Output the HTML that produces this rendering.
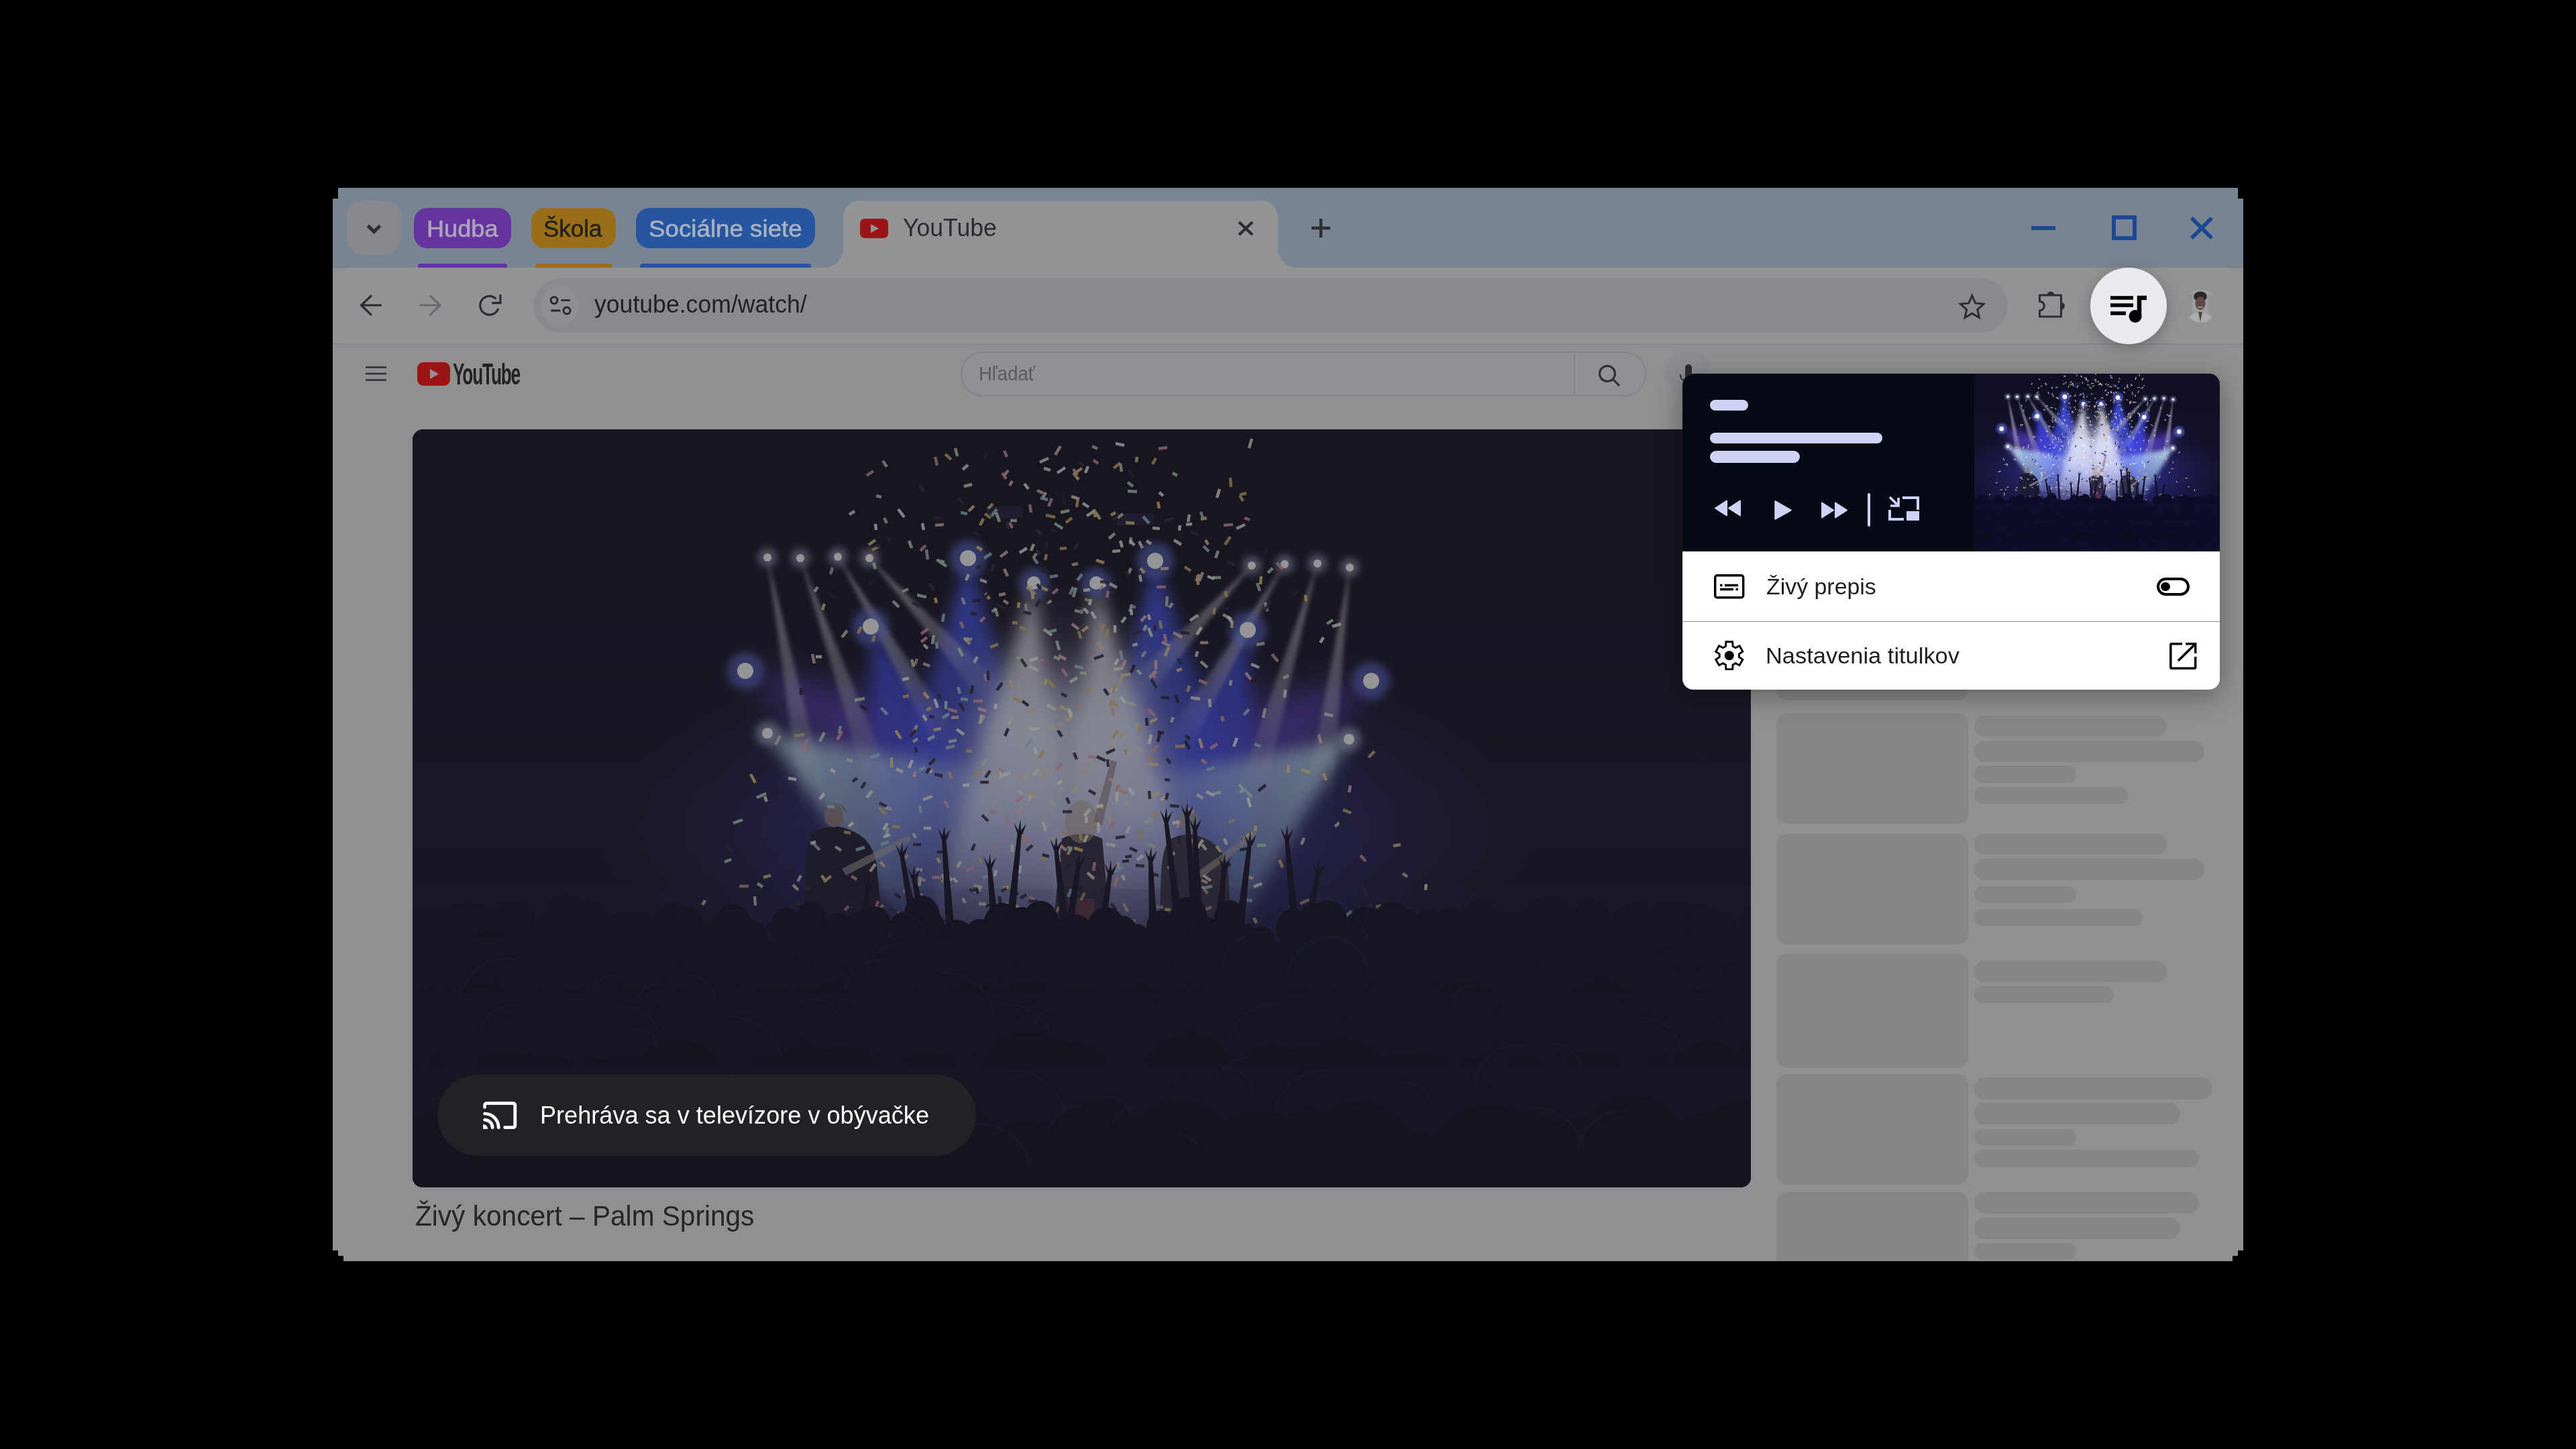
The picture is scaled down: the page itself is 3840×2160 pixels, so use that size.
<!DOCTYPE html><html><head><meta charset="utf-8"><style>
html,body{margin:0;padding:0;background:#000;width:3840px;height:2160px;overflow:hidden;}
*{box-sizing:border-box;}
.a{position:absolute;}
.t{position:absolute;white-space:nowrap;font-family:"Liberation Sans", sans-serif;}
svg{position:absolute;overflow:visible;}
</style></head><body><div class="a" style="left:496px;top:280px;width:2848px;height:1600px;background:#8f9091;clip-path:polygon(8px 0,2840px 0,2840px 16px,2848px 16px,2848px 1584px,2840px 1584px,2840px 1592px,2832px 1592px,2832px 1600px,16px 1600px,16px 1592px,8px 1592px,8px 1584px,0 1584px,0 16px,8px 16px);overflow:hidden"><div class="a" style="left:0;top:0;width:2848px;height:120px;background:#788394"></div><div class="a" style="left:21px;top:19px;width:81px;height:81px;border-radius:24px;background:#86888d"></div><svg style="left:50px;top:54px" width="23" height="15" viewBox="0 0 23 15"><path d="M2.5 2.5 L11.5 11.5 L20.5 2.5" fill="none" stroke="#2d2e31" stroke-width="5"/></svg><div class="a" style="left:121px;top:30px;width:145px;height:60px;border-radius:20px;background:#6634a0"></div><div class="a" style="left:127px;top:113px;width:133px;height:8px;border-radius:4px;background:#6634a0"></div><div class="a" style="left:296px;top:30px;width:126px;height:60px;border-radius:20px;background:#9a6e18"></div><div class="a" style="left:302px;top:113px;width:114px;height:8px;border-radius:4px;background:#9a6e18"></div><div class="a" style="left:452px;top:30px;width:267px;height:60px;border-radius:20px;background:#2756a0"></div><div class="a" style="left:458px;top:113px;width:255px;height:8px;border-radius:4px;background:#2756a0"></div><div class="t" style="left:140px;top:43.0px;font-size:35px;line-height:35px;color:#aca6b8;font-weight:400;transform:scaleX(1.0326);transform-origin:0 0;-webkit-text-stroke:0.6px #aca6b8;">Hudba</div><div class="t" style="left:314.4px;top:43.0px;font-size:35px;line-height:35px;color:#24211c;font-weight:400;transform:scaleX(1.0004);transform-origin:0 0;-webkit-text-stroke:0.6px #24211c;">Škola</div><div class="t" style="left:470.79999999999995px;top:43.0px;font-size:35px;line-height:35px;color:#aab2c2;font-weight:400;transform:scaleX(1.0495);transform-origin:0 0;-webkit-text-stroke:0.6px #aab2c2;">Sociálne siete</div><div class="a" style="left:761px;top:19px;width:648px;height:110px;border-radius:24px 24px 0 0;background:#929394"></div><div class="a" style="left:731px;top:89px;width:30px;height:30px;background:radial-gradient(circle at 0 0,transparent 30px,#929394 30.5px)"></div><div class="a" style="left:1409px;top:89px;width:30px;height:30px;background:radial-gradient(circle at 100% 0,transparent 30px,#929394 30.5px)"></div><svg style="left:786px;top:46px" width="42" height="29" viewBox="0 0 42 29"><rect width="42" height="29" rx="7" fill="#9c1414"/><path d="M16 8 L28 14.5 L16 21z" fill="#929394"/></svg><div class="t" style="left:849.5999999999999px;top:41.5px;font-size:36px;line-height:36px;color:#2a2b2e;font-weight:400;transform:scaleX(0.9875);transform-origin:0 0;">YouTube</div><svg style="left:1349px;top:49px" width="24" height="23" viewBox="0 0 24 23"><path d="M2 2L22 21M22 2L2 21" stroke="#2a2b2e" stroke-width="4.2"/></svg><svg style="left:1459px;top:46px" width="28" height="28" viewBox="0 0 28 28"><path d="M14 0V28M0 14H28" stroke="#2d2e31" stroke-width="4.4"/></svg><div class="a" style="left:2532px;top:57px;width:36px;height:6px;background:#1c4890"></div><div class="a" style="left:2652px;top:41px;width:37px;height:37px;border:6px solid #1c4890"></div><svg style="left:2768px;top:42px" width="36" height="36" viewBox="0 0 36 36"><path d="M3 3L33 33M33 3L3 33" stroke="#1c4890" stroke-width="6"/></svg><div class="a" style="left:4px;top:119px;width:2844px;height:114px;border-radius:20px 24px 0 0;background:#929394"></div><div class="a" style="left:0px;top:139px;width:4px;height:100px;background:#929394"></div><div class="a" style="left:0;top:232px;width:2848px;height:2px;background:#858689"></div><svg style="left:40px;top:159px" width="36" height="34" viewBox="0 0 36 34"><path d="M32.8 16H2.5M17.9 1.4L2.5 16L17.9 30.9" fill="none" stroke="#2a2b2e" stroke-width="3.2"/></svg><svg style="left:128px;top:159px" width="36" height="34" viewBox="0 0 36 34"><path d="M1.5 16H32M16.6 1.4L32 16L16.6 30.9" fill="none" stroke="#6a6b6e" stroke-width="3.2"/></svg><svg style="left:216px;top:158px" width="38" height="36" viewBox="0 0 38 36"><path d="M27.4 7.5A13.9 13.9 0 1 0 30.7 21.9" fill="none" stroke="#2a2b2e" stroke-width="3.1"/><path d="M33.9 1V13.6H21.3" fill="none" stroke="#2a2b2e" stroke-width="3.1"/></svg><div class="a" style="left:299px;top:135px;width:2198px;height:81px;border-radius:41px;background:#898a8d"></div><div class="a" style="left:310px;top:147px;width:58px;height:58px;border-radius:29px;background:#8e8f92"></div><svg style="left:323px;top:161px" width="34" height="30" viewBox="0 0 34 30"><circle cx="7" cy="6.6" r="5" fill="none" stroke="#262729" stroke-width="2.8"/><path d="M17.3 6.6H30.6M2.4 22H16.3" stroke="#262729" stroke-width="2.8"/><circle cx="26" cy="22" r="5" fill="none" stroke="#262729" stroke-width="2.8"/></svg><div class="t" style="left:390px;top:155.9px;font-size:36px;line-height:36px;color:#1f2023;font-weight:400;transform:scaleX(0.9892);transform-origin:0 0;">youtube.com/watch/</div><svg style="left:2416px;top:150px" width="56" height="56" viewBox="2912 430 56 56"><path d="M2939.70 440.60 L2944.64 452.00 L2957.01 453.18 L2947.69 461.40 L2950.40 473.52 L2939.70 467.20 L2929.00 473.52 L2931.71 461.40 L2922.39 453.18 L2934.76 452.00Z" fill="none" stroke="#2a2b2e" stroke-width="2.9" stroke-linejoin="miter" stroke-miterlimit="10"/></svg><svg style="left:2539px;top:150px" width="46" height="46" viewBox="3035 430 46 46"><path d="M3040.5 440H3072.5V472H3040.5V462.8A6.8 6.8 0 0 0 3040.5 449.2Z" fill="none" stroke="#2d2e31" stroke-width="3.1" stroke-linejoin="round"/><path d="M3051.5 440A5.5 5.5 0 0 1 3062.5 440Z M3072.5 450.5A5.5 5.5 0 0 1 3072.5 461.5Z" fill="#2d2e31"/></svg><svg style="left:2759px;top:151px" width="50" height="50" viewBox="3255 431 50 50"><defs><clipPath id="avc"><circle cx="3280.4" cy="456" r="24.5"/></clipPath></defs><g clip-path="url(#avc)"><rect x="3255" y="431" width="50" height="50" fill="#9c9d9f"/><rect x="3256" y="438" width="12" height="36" fill="#8a8b8d" opacity="0.7"/><rect x="3292" y="440" width="12" height="34" fill="#8e8f91" opacity="0.7"/><path d="M3258 482Q3262 467 3280 465Q3298 467 3302 482Z" fill="#acadaf"/><path d="M3277 465L3280 480L3283 465Z" fill="#5a403a"/><ellipse cx="3280" cy="442" rx="10" ry="7.5" fill="#2e2a2a"/><ellipse cx="3280" cy="452" rx="7.5" ry="10" fill="#604844"/><rect x="3276" y="457" width="8" height="2" rx="1" fill="#9a8a88"/></g></svg><svg style="left:49px;top:266px" width="31" height="22" viewBox="0 0 31 22"><path d="M0 1.5H31M0 11H31M0 20.5H31" stroke="#2d2e31" stroke-width="2.6"/></svg><svg style="left:126px;top:260px" width="49" height="35" viewBox="0 0 49 35"><rect width="49" height="35" rx="9" fill="#9c1414"/><path d="M19 10 L32 17.5 L19 25z" fill="#919295"/></svg><div class="t" style="left:179px;top:255.8px;font-size:44px;line-height:44px;color:#212224;font-weight:700;transform:scaleX(0.5964);transform-origin:0 0;letter-spacing:-2px;">YouTube</div><div class="a" style="left:936px;top:244px;width:1022px;height:67px;border-radius:34px;border:2px solid #848589;background:#909194"></div><div class="a" style="left:1850px;top:244px;width:2px;height:67px;background:#848589"></div><div class="t" style="left:963px;top:261.6px;font-size:30px;line-height:30px;color:#5a5b5e;font-weight:400;transform:scaleX(0.9158);transform-origin:0 0;">Hľadať</div><svg style="left:1886px;top:263px" width="34" height="36" viewBox="0 0 34 36"><circle cx="14" cy="14" r="11.5" fill="none" stroke="#2d2e31" stroke-width="3"/><path d="M22.5 22.5L32 32" stroke="#2d2e31" stroke-width="3"/></svg><div class="a" style="left:1987px;top:243px;width:68px;height:68px;border-radius:50%;background:#8b8c8f"></div><div class="a" style="left:2016px;top:263px;width:10px;height:26px;border-radius:5px;background:#2a2b2e"></div><svg style="left:2005px;top:275px" width="20" height="20" viewBox="0 0 20 20"><path d="M4 3Q4 11 10 12" fill="none" stroke="#2a2b2e" stroke-width="2"/></svg><div class="a" style="left:119px;top:360px;width:1995px;height:1130px;border-radius:16px;overflow:hidden;background:#15142a"><svg style="left:0;top:0;" width="1995" height="1130" viewBox="0 0 1995 1130"><use href="#scene"/><rect width="1995" height="1130" fill="#211f1b" opacity="0.45"/></svg></div><div class="a" style="left:156px;top:1322px;width:803px;height:121px;border-radius:61px;background:#212226"></div><svg style="left:219px;top:1355px" width="60" height="55" viewBox="715 1635 60 55"><path d="M722.6 1650.5V1648Q722.6 1644.6 726 1644.6H764.4Q767.8 1644.6 767.8 1648V1677.2Q767.8 1680.6 764.4 1680.6H752.6" fill="none" stroke="#fff" stroke-width="4.8" stroke-linecap="round" stroke-linejoin="round"/><path d="M722.6 1660.2A20.6 20.6 0 0 1 743.2 1680.8M722.6 1669.3A11.5 11.5 0 0 1 734.1 1680.8" fill="none" stroke="#fff" stroke-width="4.8" stroke-linecap="round"/><path d="M720.2 1676A7 7 0 0 1 727.2 1683H720.2Z" fill="#fff"/></svg><div class="t" style="left:309px;top:1364.0px;font-size:37px;line-height:37px;color:#ffffff;font-weight:400;transform:scaleX(0.9759);transform-origin:0 0;">Prehráva sa v televízore v obývačke</div><div class="t" style="left:123px;top:1512.4px;font-size:42px;line-height:42px;color:#242527;font-weight:400;transform:scaleX(0.9666);transform-origin:0 0;">Živý koncert – Palm Springs</div><div class="a" style="left:2152px;top:604px;width:286px;height:160px;border-radius:16px;background:#858688"></div><div class="a" style="left:2152px;top:783px;width:286px;height:165px;border-radius:16px;background:#858688"></div><div class="a" style="left:2152px;top:963px;width:286px;height:165px;border-radius:16px;background:#858688"></div><div class="a" style="left:2152px;top:1142px;width:286px;height:170px;border-radius:16px;background:#858688"></div><div class="a" style="left:2152px;top:1321px;width:286px;height:165px;border-radius:16px;background:#858688"></div><div class="a" style="left:2152px;top:1497px;width:286px;height:173px;border-radius:16px;background:#858688"></div><div class="a" style="left:2447px;top:787px;width:287px;height:31px;border-radius:16px;background:#858688"></div><div class="a" style="left:2447px;top:824px;width:343px;height:32px;border-radius:16px;background:#858688"></div><div class="a" style="left:2447px;top:861px;width:152px;height:26px;border-radius:16px;background:#858688"></div><div class="a" style="left:2447px;top:893px;width:229px;height:25px;border-radius:16px;background:#858688"></div><div class="a" style="left:2447px;top:963px;width:287px;height:31px;border-radius:16px;background:#858688"></div><div class="a" style="left:2447px;top:1000px;width:343px;height:32px;border-radius:16px;background:#858688"></div><div class="a" style="left:2447px;top:1041px;width:152px;height:25px;border-radius:16px;background:#858688"></div><div class="a" style="left:2447px;top:1075px;width:251px;height:25px;border-radius:16px;background:#858688"></div><div class="a" style="left:2447px;top:1152px;width:287px;height:32px;border-radius:16px;background:#858688"></div><div class="a" style="left:2447px;top:1190px;width:208px;height:25px;border-radius:16px;background:#858688"></div><div class="a" style="left:2447px;top:1326px;width:355px;height:33px;border-radius:16px;background:#858688"></div><div class="a" style="left:2447px;top:1364px;width:307px;height:32px;border-radius:16px;background:#858688"></div><div class="a" style="left:2447px;top:1403px;width:152px;height:25px;border-radius:16px;background:#858688"></div><div class="a" style="left:2447px;top:1434px;width:335px;height:26px;border-radius:16px;background:#858688"></div><div class="a" style="left:2447px;top:1497px;width:335px;height:32px;border-radius:16px;background:#858688"></div><div class="a" style="left:2447px;top:1535px;width:307px;height:32px;border-radius:16px;background:#858688"></div><div class="a" style="left:2447px;top:1573px;width:152px;height:25px;border-radius:16px;background:#858688"></div></div><div class="a" style="left:3116px;top:399px;width:114px;height:114px;border-radius:50%;background:#e8eaee;box-shadow:0 6px 24px rgba(0,0,0,0.25)"></div><svg style="left:3146px;top:441px" width="54" height="40" viewBox="0 0 54 40"><path d="M0 3H34M0 14H34M0 26H23" stroke="#000" stroke-width="5.5"/><path d="M43 34V3H54" fill="none" stroke="#000" stroke-width="6.5"/><circle cx="37" cy="30.5" r="9.5" fill="#000"/></svg><div class="a" style="left:2508px;top:557px;width:801px;height:471px;border-radius:16px;overflow:hidden;background:#fff;box-shadow:0 8px 40px rgba(0,0,0,0.35)"><div class="a" style="left:0;top:0;width:801px;height:265px;background:#060a14"></div><svg style="left:435px;top:0;overflow:hidden" width="366" height="265" viewBox="0 0 366 265"><g transform="translate(-100,-20) scale(0.2837)"><use href="#scene"/></g></svg><div class="a" style="left:41px;top:39px;width:57px;height:16px;border-radius:8px;background:#cfd3f7"></div><div class="a" style="left:41px;top:88px;width:257px;height:16px;border-radius:8px;background:#cfd3f7"></div><div class="a" style="left:41px;top:115px;width:134px;height:18px;border-radius:9px;background:#cfd3f7"></div><svg style="left:48px;top:188px" width="40" height="26" viewBox="0 0 40 26"><path d="M1 12.5L18 1.5V23.5Z M21 12.5L38 1.5V23.5Z" fill="#cfd3f7" stroke="#cfd3f7" stroke-width="2" stroke-linejoin="round"/></svg><svg style="left:137px;top:189px" width="26" height="30" viewBox="0 0 26 30"><path d="M1.5 1.5L24.5 14.5L1.5 27.5Z" fill="#cfd3f7" stroke="#cfd3f7" stroke-width="2.5" stroke-linejoin="round"/></svg><svg style="left:207px;top:191px" width="40" height="26" viewBox="0 0 40 26"><path d="M1 1.5L18 12.5L1 23.5Z M21 1.5L38 12.5L21 23.5Z" fill="#cfd3f7" stroke="#cfd3f7" stroke-width="2" stroke-linejoin="round"/></svg><div class="a" style="left:276px;top:178px;width:4px;height:50px;border-radius:2px;background:#cfd3f7"></div><svg style="left:307px;top:182px" width="46" height="37" viewBox="0 0 46 37"><path d="M21 3H44V21M2 21V35H23" fill="none" stroke="#cfd3f7" stroke-width="4"/><rect x="27" y="23" width="19" height="14" fill="#cfd3f7"/><path d="M2 2L15 15M3 15H15V3" fill="none" stroke="#cfd3f7" stroke-width="3.6"/></svg><div class="a" style="left:0;top:368.5px;width:801px;height:1.5px;background:#7c8ac4"></div><svg style="left:47px;top:299px" width="46" height="37" viewBox="0 0 46 37"><rect x="1.7" y="1.7" width="42" height="33" rx="3" fill="none" stroke="#000" stroke-width="3.4"/><path d="M9 16.5H12.5M16 16.5H36M9 22.5H29M32.5 22.5H36" stroke="#000" stroke-width="3.4"/></svg><svg style="left:42px;top:393px" width="56" height="56" viewBox="2550 950 56 56"><path d="M2572.5 963.4 L2572.9 956.8 L2582.7 956.8 L2583.1 963.4 L2587.1 965.7 L2593.0 962.7 L2597.9 971.2 L2592.4 974.9 L2592.4 979.5 L2597.9 983.2 L2593.0 991.7 L2587.1 988.7 L2583.1 991.0 L2582.7 997.6 L2572.9 997.6 L2572.5 991.0 L2568.5 988.7 L2562.6 991.7 L2557.7 983.2 L2563.2 979.5 L2563.2 974.9 L2557.7 971.2 L2562.6 962.7 L2568.5 965.7Z" fill="none" stroke="#000" stroke-width="2.9" stroke-linejoin="miter"/><circle cx="2577.8" cy="977.2" r="7" fill="#000"/></svg><div class="t" style="left:124.7px;top:299.9px;font-size:34px;line-height:34px;color:#1f1f1f;font-weight:400;transform:scaleX(0.9965);transform-origin:0 0;">Živý prepis</div><div class="t" style="left:124px;top:403.2px;font-size:34px;line-height:34px;color:#1f1f1f;font-weight:400;transform:scaleX(1.0127);transform-origin:0 0;">Nastavenia titulkov</div><div class="a" style="left:707px;top:304px;width:49px;height:27px;border-radius:14px;border:4.2px solid #000"></div><div class="a" style="left:713.4px;top:310.7px;width:13.4px;height:13.4px;border-radius:50%;background:#000"></div><svg style="left:726px;top:401px" width="41" height="40" viewBox="0 0 41 40"><path d="M19 1.8H3.5Q1.8 1.8 1.8 3.5V36.5Q1.8 38.2 3.5 38.2H37Q38.7 38.2 38.7 36.5V21" fill="none" stroke="#000" stroke-width="3.5"/><path d="M24 1.8H38.7V16M38.7 1.8L13 27" fill="none" stroke="#000" stroke-width="3.5"/></svg></div><svg width="0" height="0" style="position:absolute;left:0;top:0"><defs><filter id="b3" x="-50%" y="-50%" width="200%" height="200%"><feGaussianBlur stdDeviation="3"/></filter><filter id="b6" x="-50%" y="-50%" width="200%" height="200%"><feGaussianBlur stdDeviation="6"/></filter><filter id="b12" x="-50%" y="-50%" width="200%" height="200%"><feGaussianBlur stdDeviation="12"/></filter><filter id="b25" x="-50%" y="-50%" width="200%" height="200%"><feGaussianBlur stdDeviation="25"/></filter><filter id="b50" x="-50%" y="-50%" width="200%" height="200%"><feGaussianBlur stdDeviation="50"/></filter><linearGradient id="bgv" x1="0" y1="0" x2="0" y2="1"><stop offset="0" stop-color="#0f0d22"/><stop offset="0.55" stop-color="#15122e"/><stop offset="1" stop-color="#0c0b1a"/></linearGradient><radialGradient id="hz1"><stop offset="0" stop-color="#4a4cd0" stop-opacity="0.85"/><stop offset="0.55" stop-color="#3838b0" stop-opacity="0.42"/><stop offset="1" stop-color="#2a2a80" stop-opacity="0"/></radialGradient><linearGradient id="g0" gradientUnits="userSpaceOnUse" x1="496" y1="360" x2="845" y2="555"><stop offset="0" stop-color="#6a48e8" stop-opacity="0.8"/><stop offset="0.6" stop-color="#6a48e8" stop-opacity="0.44"/><stop offset="1" stop-color="#6a48e8" stop-opacity="0.05"/></linearGradient><linearGradient id="g1" gradientUnits="userSpaceOnUse" x1="1429" y1="375" x2="1110" y2="565"><stop offset="0" stop-color="#6a48e8" stop-opacity="0.8"/><stop offset="0.6" stop-color="#6a48e8" stop-opacity="0.44"/><stop offset="1" stop-color="#6a48e8" stop-opacity="0.05"/></linearGradient><linearGradient id="g2" gradientUnits="userSpaceOnUse" x1="683" y1="294" x2="815" y2="675"><stop offset="0" stop-color="#4048f0" stop-opacity="0.95"/><stop offset="0.6" stop-color="#4048f0" stop-opacity="0.52"/><stop offset="1" stop-color="#4048f0" stop-opacity="0.1"/></linearGradient><linearGradient id="g3" gradientUnits="userSpaceOnUse" x1="1245" y1="299" x2="1135" y2="675"><stop offset="0" stop-color="#4048f0" stop-opacity="0.95"/><stop offset="0.6" stop-color="#4048f0" stop-opacity="0.52"/><stop offset="1" stop-color="#4048f0" stop-opacity="0.1"/></linearGradient><linearGradient id="g4" gradientUnits="userSpaceOnUse" x1="828" y1="192" x2="830" y2="610"><stop offset="0" stop-color="#4658ff" stop-opacity="0.95"/><stop offset="0.6" stop-color="#4658ff" stop-opacity="0.52"/><stop offset="1" stop-color="#4658ff" stop-opacity="0.1"/></linearGradient><linearGradient id="g5" gradientUnits="userSpaceOnUse" x1="1107" y1="196" x2="1120" y2="610"><stop offset="0" stop-color="#4658ff" stop-opacity="0.95"/><stop offset="0.6" stop-color="#4658ff" stop-opacity="0.52"/><stop offset="1" stop-color="#4658ff" stop-opacity="0.1"/></linearGradient><linearGradient id="g6" gradientUnits="userSpaceOnUse" x1="529" y1="453" x2="840" y2="650"><stop offset="0" stop-color="#b8dcff" stop-opacity="0.95"/><stop offset="0.6" stop-color="#b8dcff" stop-opacity="0.52"/><stop offset="1" stop-color="#b8dcff" stop-opacity="0.1"/></linearGradient><linearGradient id="g7" gradientUnits="userSpaceOnUse" x1="1396" y1="462" x2="1115" y2="660"><stop offset="0" stop-color="#b8dcff" stop-opacity="0.95"/><stop offset="0.6" stop-color="#b8dcff" stop-opacity="0.52"/><stop offset="1" stop-color="#b8dcff" stop-opacity="0.1"/></linearGradient><linearGradient id="wc" x1="0" y1="0" x2="0" y2="1"><stop offset="0" stop-color="#f0f4ff" stop-opacity="0.95"/><stop offset="0.5" stop-color="#e0e8ff" stop-opacity="0.7"/><stop offset="1" stop-color="#c8d4ff" stop-opacity="0.15"/></linearGradient><linearGradient id="wc2" x1="0" y1="0" x2="0" y2="1"><stop offset="0" stop-color="#f0f4ff" stop-opacity="0"/><stop offset="0.25" stop-color="#e8eeff" stop-opacity="0.75"/><stop offset="1" stop-color="#c8d4ff" stop-opacity="0.12"/></linearGradient><linearGradient id="g8" gradientUnits="userSpaceOnUse" x1="926" y1="229" x2="880" y2="770"><stop offset="0" stop-color="#f4f6ff" stop-opacity="0.9"/><stop offset="0.6" stop-color="#f4f6ff" stop-opacity="0.50"/><stop offset="1" stop-color="#f4f6ff" stop-opacity="0.05"/></linearGradient><linearGradient id="g9" gradientUnits="userSpaceOnUse" x1="1019" y1="229" x2="1070" y2="770"><stop offset="0" stop-color="#f4f6ff" stop-opacity="0.9"/><stop offset="0.6" stop-color="#f4f6ff" stop-opacity="0.50"/><stop offset="1" stop-color="#f4f6ff" stop-opacity="0.05"/></linearGradient><radialGradient id="cg"><stop offset="0" stop-color="#e8ecff" stop-opacity="0.4"/><stop offset="1" stop-color="#c0c8ff" stop-opacity="0"/></radialGradient><linearGradient id="g10" gradientUnits="userSpaceOnUse" x1="529" y1="191" x2="600" y2="560"><stop offset="0" stop-color="#f0f0ff" stop-opacity="0.6"/><stop offset="0.6" stop-color="#f0f0ff" stop-opacity="0.33"/><stop offset="1" stop-color="#f0f0ff" stop-opacity="0"/></linearGradient><linearGradient id="g11" gradientUnits="userSpaceOnUse" x1="578" y1="192" x2="700" y2="540"><stop offset="0" stop-color="#f0f0ff" stop-opacity="0.6"/><stop offset="0.6" stop-color="#f0f0ff" stop-opacity="0.33"/><stop offset="1" stop-color="#f0f0ff" stop-opacity="0"/></linearGradient><linearGradient id="g12" gradientUnits="userSpaceOnUse" x1="634" y1="190" x2="800" y2="470"><stop offset="0" stop-color="#f0f0ff" stop-opacity="0.6"/><stop offset="0.6" stop-color="#f0f0ff" stop-opacity="0.33"/><stop offset="1" stop-color="#f0f0ff" stop-opacity="0"/></linearGradient><linearGradient id="g13" gradientUnits="userSpaceOnUse" x1="681" y1="192" x2="870" y2="400"><stop offset="0" stop-color="#f0f0ff" stop-opacity="0.6"/><stop offset="0.6" stop-color="#f0f0ff" stop-opacity="0.33"/><stop offset="1" stop-color="#f0f0ff" stop-opacity="0"/></linearGradient><linearGradient id="g14" gradientUnits="userSpaceOnUse" x1="1397" y1="206" x2="1350" y2="560"><stop offset="0" stop-color="#f0f0ff" stop-opacity="0.6"/><stop offset="0.6" stop-color="#f0f0ff" stop-opacity="0.33"/><stop offset="1" stop-color="#f0f0ff" stop-opacity="0"/></linearGradient><linearGradient id="g15" gradientUnits="userSpaceOnUse" x1="1349" y1="200" x2="1250" y2="540"><stop offset="0" stop-color="#f0f0ff" stop-opacity="0.6"/><stop offset="0.6" stop-color="#f0f0ff" stop-opacity="0.33"/><stop offset="1" stop-color="#f0f0ff" stop-opacity="0"/></linearGradient><linearGradient id="g16" gradientUnits="userSpaceOnUse" x1="1300" y1="201" x2="1140" y2="470"><stop offset="0" stop-color="#f0f0ff" stop-opacity="0.6"/><stop offset="0.6" stop-color="#f0f0ff" stop-opacity="0.33"/><stop offset="1" stop-color="#f0f0ff" stop-opacity="0"/></linearGradient><linearGradient id="g17" gradientUnits="userSpaceOnUse" x1="1251" y1="203" x2="1070" y2="400"><stop offset="0" stop-color="#f0f0ff" stop-opacity="0.6"/><stop offset="0.6" stop-color="#f0f0ff" stop-opacity="0.33"/><stop offset="1" stop-color="#f0f0ff" stop-opacity="0"/></linearGradient><linearGradient id="cf" x1="0" y1="0" x2="0" y2="1"><stop offset="0" stop-color="#0c0b1e" stop-opacity="0"/><stop offset="1" stop-color="#0c0b1e" stop-opacity="0.3"/></linearGradient><g id="scene"><rect width="1995" height="1130" fill="url(#bgv)"/><ellipse cx="975" cy="600" rx="700" ry="300" fill="url(#hz1)"/><polygon points="496,360 860,430 830,680" fill="url(#g0)" filter="url(#b25)"/><polygon points="1429,375 1090,440 1130,690" fill="url(#g1)" filter="url(#b25)"/><polygon points="683,294 690,700 940,650" fill="url(#g2)" filter="url(#b12)"/><polygon points="1245,299 1010,650 1260,700" fill="url(#g3)" filter="url(#b12)"/><polygon points="828,192 700,600 960,620" fill="url(#g4)" filter="url(#b12)"/><polygon points="1107,196 990,620 1250,600" fill="url(#g5)" filter="url(#b12)"/><polygon points="529,453 920,520 760,780" fill="url(#g6)" filter="url(#b12)"/><polygon points="1396,462 1030,530 1200,790" fill="url(#g7)" filter="url(#b12)"/><polygon points="926,229 760,770 1000,770" fill="url(#g8)" filter="url(#b12)"/><polygon points="1019,229 950,770 1190,770" fill="url(#g9)" filter="url(#b12)"/><polygon points="880,330 1070,330 1130,560 1170,770 780,770 820,560" fill="url(#wc2)" filter="url(#b25)"/><ellipse cx="975" cy="500" rx="200" ry="280" fill="url(#cg)"/><polygon points="529,191 580,564 620,556" fill="url(#g10)" filter="url(#b3)"/><polygon points="578,192 681,547 719,533" fill="url(#g11)" filter="url(#b3)"/><polygon points="634,190 783,480 817,460" fill="url(#g12)" filter="url(#b3)"/><polygon points="681,192 855,413 885,387" fill="url(#g13)" filter="url(#b3)"/><polygon points="1397,206 1330,557 1370,563" fill="url(#g14)" filter="url(#b3)"/><polygon points="1349,200 1231,534 1269,546" fill="url(#g15)" filter="url(#b3)"/><polygon points="1300,201 1123,460 1157,480" fill="url(#g16)" filter="url(#b3)"/><polygon points="1251,203 1055,386 1085,414" fill="url(#g17)" filter="url(#b3)"/><circle cx="529" cy="191" r="14" fill="#c8d0ff" opacity="0.55" filter="url(#b6)"/><circle cx="529" cy="191" r="6" fill="#f4f6ff"/><circle cx="578" cy="192" r="14" fill="#c8d0ff" opacity="0.55" filter="url(#b6)"/><circle cx="578" cy="192" r="6" fill="#f4f6ff"/><circle cx="634" cy="190" r="14" fill="#c8d0ff" opacity="0.55" filter="url(#b6)"/><circle cx="634" cy="190" r="6" fill="#f4f6ff"/><circle cx="681" cy="192" r="14" fill="#c8d0ff" opacity="0.55" filter="url(#b6)"/><circle cx="681" cy="192" r="6" fill="#f4f6ff"/><circle cx="1251" cy="203" r="14" fill="#c8d0ff" opacity="0.55" filter="url(#b6)"/><circle cx="1251" cy="203" r="6" fill="#f4f6ff"/><circle cx="1300" cy="201" r="14" fill="#c8d0ff" opacity="0.55" filter="url(#b6)"/><circle cx="1300" cy="201" r="6" fill="#f4f6ff"/><circle cx="1349" cy="200" r="14" fill="#c8d0ff" opacity="0.55" filter="url(#b6)"/><circle cx="1349" cy="200" r="6" fill="#f4f6ff"/><circle cx="1397" cy="206" r="14" fill="#c8d0ff" opacity="0.55" filter="url(#b6)"/><circle cx="1397" cy="206" r="6" fill="#f4f6ff"/><circle cx="828" cy="192" r="28" fill="#6a80ff" opacity="0.55" filter="url(#b6)"/><circle cx="828" cy="192" r="12" fill="#f4f6ff"/><circle cx="1107" cy="196" r="28" fill="#6a80ff" opacity="0.55" filter="url(#b6)"/><circle cx="1107" cy="196" r="12" fill="#f4f6ff"/><circle cx="926" cy="229" r="23" fill="#6a80ff" opacity="0.55" filter="url(#b6)"/><circle cx="926" cy="229" r="10" fill="#f4f6ff"/><circle cx="1019" cy="229" r="23" fill="#6a80ff" opacity="0.55" filter="url(#b6)"/><circle cx="1019" cy="229" r="10" fill="#f4f6ff"/><circle cx="683" cy="294" r="28" fill="#6a80ff" opacity="0.55" filter="url(#b6)"/><circle cx="683" cy="294" r="12" fill="#f4f6ff"/><circle cx="1245" cy="299" r="28" fill="#6a80ff" opacity="0.55" filter="url(#b6)"/><circle cx="1245" cy="299" r="12" fill="#f4f6ff"/><circle cx="496" cy="360" r="28" fill="#6a80ff" opacity="0.55" filter="url(#b6)"/><circle cx="496" cy="360" r="12" fill="#f4f6ff"/><circle cx="1429" cy="375" r="28" fill="#6a80ff" opacity="0.55" filter="url(#b6)"/><circle cx="1429" cy="375" r="12" fill="#f4f6ff"/><circle cx="529" cy="453" r="18" fill="#c8d0ff" opacity="0.55" filter="url(#b6)"/><circle cx="529" cy="453" r="8" fill="#f4f6ff"/><circle cx="1396" cy="462" r="18" fill="#c8d0ff" opacity="0.55" filter="url(#b6)"/><circle cx="1396" cy="462" r="8" fill="#f4f6ff"/><rect x="855" y="115" width="55" height="18" fill="#2a2a50" opacity="0.6"/><rect x="1050" y="125" width="55" height="18" fill="#2a2a50" opacity="0.6"/><g><path d="M600,600 q28,-16 58,0 q28,12 34,50 l10,110 l-120,0 l4,-110 q2,-38 14,-50z" fill="#1e1c36"/><ellipse cx="628" cy="576" rx="14" ry="17" fill="#8a7a80" opacity="0.9"/><path d="M611,572 q17,-30 36,0 q-2,-12 -18,-16 q-16,4 -18,16z" fill="#6a6870"/><path d="M640,655 l100,-50 l4,8 l-98,52z" fill="#b0aab8" opacity="0.6"/><path d="M968,610 q30,-14 60,0 l14,160 l-90,0z" fill="#302a48"/><ellipse cx="997" cy="585" rx="24" ry="32" fill="#b0a098" opacity="0.55"/><path d="M1015,585 l26,-92 l9,3 l-22,94z" fill="#9a8898" opacity="0.8"/><path d="M978,700 l38,0 l5,80 l-46,0z" fill="#7a3a50" opacity="0.7"/><path d="M1128,612 q28,-16 58,0 q26,14 30,48 l6,110 l-110,0 l4,-110 q2,-34 12,-48z" fill="#34344e"/><ellipse cx="1157" cy="584" rx="15" ry="18" fill="#9a90a0" opacity="0.85"/><path d="M1170,660 l85,-62 l5,7 l-84,64z" fill="#b0a8a8" opacity="0.6"/></g><path d="M1016 122l-11 7M1059 356l-14 2M1251 14l-4 14M844 707l11 1M846 224l10 4M775 509l-9 2M690 648l-8 11M895 430l-7 10M659 122l-8 5M685 539l-8 10M991 370l-11 7M1084 217l2 10M946 411l13 7M762 594l11 1M1034 618l14 3M558 730l-8 5M721 506l10 5M1081 320l-8 2M1050 387l-10 3M1170 331l-2 8M1179 665l11 8M829 216l-4 9M1301 388l-1 12M1210 610l4 9M1039 230l11 6M761 426l5 8M790 663l5 13M894 619l0 11M806 669l6 6M920 353l13 7M941 298l12 9M1083 167l5 10M1169 544l9 6M926 171l-4 10M1068 640l-8 0M842 339l-5 9M948 43l-13 6M1160 400l14 2M940 585l4 14M848 425l-1 13M834 82l-12 3M903 538l6 6M436 702l-4 7M944 94l-4 7M1135 165l11 7M1241 142l-13 6M828 53l-8 7M1171 277l-12 8M1188 402l1 12M1097 276l2 8M1177 619l6 8M941 58l10 3M982 100l12 4M567 679l8 8M898 709l8 6M923 546l-5 7M1158 127l-2 11M1006 661l10 9M876 510l2 11M934 506l-9 10M1058 664l3 8M817 644l-5 9M525 547l3 8M1097 296l5 13M1069 592l-5 10M1126 547l-11 5M762 321l6 6M1103 147l11 1M775 547l-14 5" stroke="#f4f0e8" stroke-width="4.5" opacity="0.8"/><path d="M752 441l-5 10M1125 249l-1 15M750 510l-3 8M814 429l-11 1M986 462l-9 0M998 509l12 4M1176 672l9 4M1178 213l-5 13M1059 126l-8 6M952 255l-6 6M703 564l11 2M869 267l3 12M914 383l-8 3M983 290l10 8M1093 278l-7 8M691 99l8 2M1007 294l-9 7M1108 344l-0 14M963 337l11 6M548 457l-7 13M931 91l9 4M701 47l6 9M1071 161l-1 10M1398 531l-2 10M888 61l-6 8M882 208l5 11M1306 367l-8 4M1109 360l-11 10M961 608l-13 5M1239 667l14 2M1098 618l9 5M940 501l4 8M1143 583l-3 11M1035 732l10 5M792 142l-13 1M1242 363l8 10M966 25l-8 13M761 349l10 4M908 563l-7 10M1040 575l-2 10M964 619l11 9M1351 455l3 13M1134 303l13 7M1057 369l-4 13M960 439l10 1M894 77l-4 7M1021 318l8 10M1127 207l-12 1M1033 231l-9 7M884 245l-10 2M901 520l11 0M703 132l4 8M987 270l8 2M1476 662l7 5M1060 707l6 12M881 255l7 5M1010 497l-8 4M739 238l-9 4M1270 319l-12 2M887 182l-11 8M1177 681l8 11M843 416l12 4M933 181l-8 11M1013 25l8 4M1117 317l12 6M1052 645l0 9M697 645l7 7M1063 344l-6 13M1062 452l-9 7M1039 521l7 5M1174 318l12 0M992 200l-9 2M596 335l3 14M624 666l-8 6M928 417l-14 5M723 720l8 6" stroke="#e8c8c0" stroke-width="4.5" opacity="0.8"/><path d="M795 405l-0 12M630 622l9 6M960 315l4 14M785 197l11 7M1271 416l-3 14M915 510l-4 12M1104 582l-13 4M1282 207l-7 7M979 121l-13 3M1359 424l13 3M744 343l3 11M1271 258l3 13M977 419l7 5M687 199l3 9M1208 276l13 7M1205 541l-11 2M956 339l9 4M777 307l-2 13M778 457l-10 6M837 680l12 3M870 267l-6 5M647 492l9 3M1064 406l14 6M752 247l14 3M674 401l-15 3M740 166l4 11M1055 51l2 12M514 677l8 5M809 28l3 12M856 492l-7 9M751 656l9 1M1047 155l-9 8M492 582l-14 5M1175 346l10 9M1080 359l6 6M1078 437l3 11M648 300l-8 10M853 427l-9 12M989 236l-4 14M753 461l-7 5M475 641l-10 4M822 312l12 1M1066 79l8 6M957 140l12 8M963 532l8 6M952 552l6 9M1243 540l8 8M1177 730l-12 8M1243 537l-10 4M1205 221l-12 0M1066 555l-6 6M995 363l9 1M781 195l12 3M898 427l-7 6M746 602l4 7M1201 181l-4 11M901 136l-10 0M1133 65l7 4M901 340l13 6M527 543l-14 6M716 256l9 9M604 235l-5 7M1134 429l-3 8M951 440l5 8M1372 284l-9 6M1220 374l-1 8M709 594l-3 12M1048 724l-8 6M1066 92l14 1M579 665l-5 9M1071 207l-4 8M757 667l-2 14M614 452l-7 13M1080 475l9 5M1094 292l-4 8M915 438l-1 10M814 326l6 12M1136 631l-8 7M1382 586l-7 6M1133 259l-5 7M1329 609l-4 10M1259 620l13 0M870 124l5 14M1232 529l8 10M811 463l-12 3" stroke="#c8e8d0" stroke-width="4.5" opacity="0.8"/><path d="M1080 41l-1 8M610 665l6 10M890 374l4 10M962 636l3 8M1173 216l-5 10M904 258l-1 8M1110 431l-11 6M1473 619l-11 2M1184 132l-9 2M1265 219l-1 12M985 65l8 10M889 682l-9 2M504 514l7 13M1111 108l2 10M1099 499l13 1M1018 562l12 1M1085 207l6 7M924 235l-9 2M1358 513l4 10M982 622l-5 12M994 534l-10 5M534 665l-11 3M1252 602l-13 6M1257 591l-1 8M1306 500l-1 12M934 513l7 5M1331 247l1 9M923 240l2 13M614 260l-3 9M920 238l8 8M841 175l8 5M936 235l11 5M1047 469l-8 5M1018 123l7 11M1070 365l-14 2M822 311l9 9M1170 217l1 15M1147 357l-8 3M720 449l8 12M1307 709l9 7M851 133l-5 10M854 244l6 9M779 251l2 8M1325 507l13 5M986 624l13 4M1254 728l4 8M782 639l4 7M788 446l-11 2M865 111l-7 7M922 730l3 8M1182 165l4 7M965 412l10 7M1222 287l-1 9M982 429l-8 6M998 58l-12 8M1019 195l12 4M945 372l-3 9M918 544l9 2M1127 325l-5 13M690 165l-10 7M1016 119l2 12M762 392l7 9M1173 461l4 14M1113 542l-13 6M1198 621l7 9M837 114l-8 8M714 489l0 15M1063 139l13 1M1130 716l-9 0M1048 124l-7 4" stroke="#f0d890" stroke-width="4.5" opacity="0.8"/><path d="M850 405l-14 0M962 238l-8 7M953 103l-5 12M757 670l8 3M874 505l7 5M1007 488l14 1M1155 565l10 6M1413 635l8 9M920 112l2 12M626 206l-3 10M1104 363l3 8M694 703l-3 10M1097 417l10 11M1121 305l2 12M1176 492l7 6M860 567l9 5M910 606l3 11M798 417l14 4M817 287l4 9M1109 712l10 0M1172 374l12 5M1288 199l9 9M752 342l-3 9M853 280l-7 7M767 310l-9 7M585 475l7 6M1042 415l4 12M837 653l-12 5M1112 472l-12 8M1191 712l-9 4M740 683l-9 7M879 65l6 9M788 668l-14 0M738 634l-7 10M863 621l10 4M769 297l-11 8M1070 264l8 1M1200 469l-11 7M1037 241l-2 10M1125 27l-13 2M968 357l8 11M1281 335l9 11M890 139l4 8M640 450l-7 13M654 666l8 5M988 407l5 7M1017 645l-2 13M909 548l-10 8M1223 142l-14 1M1054 529l-6 10M779 41l3 13M882 32l4 9M793 554l6 10M1109 235l14 0M687 62l-10 7M1015 46l7 5M501 681l-14 0M967 498l-7 10M941 344l-9 2M589 463l-8 13M765 173l-8 8M853 365l3 10M985 59l6 9M885 579l5 10M1240 132l8 3M1047 586l-9 8M650 711l-6 6" stroke="#e0a0b0" stroke-width="4.5" opacity="0.8"/><path d="M1089 130l9 10M936 102l11 3M976 622l7 6M1092 618l11 4M764 504l-9 4M881 552l0 13M819 251l4 10M781 317l1 10M982 685l-5 12M698 415l10 10M1192 681l-13 3M962 218l-12 2M1247 417l-8 9M1195 504l-11 4M987 353l13 3M760 692l-6 8M817 124l10 2M998 216l-7 9M618 562l11 1M914 260l1 12M913 581l-4 10M947 571l-0 10M926 192l6 8M871 119l-8 10M1259 229l4 12M863 185l-11 7M1059 652l-12 8M892 557l0 12M766 179l2 15M696 485l-14 4M1255 469l9 4M1072 261l-3 11M1179 174l8 8M906 668l-14 2M808 472l-13 3M800 424l-10 6M813 384l3 10M1400 718l-9 7M862 665l-12 3M756 561l2 11M792 275l-2 12M1093 331l-6 8M597 617l10 10M638 442l-2 11M710 615l-12 4M674 623l-13 4M998 265l-1 10M923 463l-9 10M817 402l11 1M1175 123l3 9M1055 330l3 14M1242 701l10 2M960 299l-11 3M985 235l-5 11" stroke="#a0d0e0" stroke-width="4.5" opacity="0.8"/><path d="M1027 223l5 12M1142 585l-9 2M1178 612l-8 12M1220 734l-12 5M1358 310l-5 8M1144 143l-1 8M1245 549l4 14M1071 268l1 9M1511 678l-1 9M1266 677l-12 5M912 81l6 8M1012 272l6 10M906 650l-2 12M1007 55l-4 10M1185 219l10 4M1055 399l8 9M614 543l-7 8M1101 455l-3 14M601 339l9 0M1094 166l7 5M1176 295l-7 11M745 493l-5 12M1022 586l1 15M830 530l-10 1M657 586l-7 6M1006 605l-5 10M1055 166l3 10M778 402l5 13M1067 535l8 10M1063 280l-6 8M847 686l-10 3M690 141l1 9M1001 267l6 7M1183 540l12 6M978 416l4 13M510 696l1 14M1011 253l-2 9M1162 141l-9 1M740 371l-10 2M1113 94l6 5M1055 181l-12 1M916 177l-11 7M968 524l-7 4M1069 165l7 8M1215 279l7 9M811 447l11 8M1048 21l13 3M891 512l-11 4M708 587l-6 10M601 615l-8 2M1229 460l-5 13M927 474l3 10M1047 292l-0 11M712 604l-10 4M1050 541l-0 14M1010 239l-10 1M724 119l9 12M1203 89l-4 13M1142 735l6 8M1024 736l9 0M560 520l12 2M1250 350l12 5M820 699l4 7M999 110l9 6M1089 635l-9 7M973 57l-12 8M1029 560l-9 2M870 657l-2 9M869 409l-0 8M1010 566l-9 11M623 507l7 4M1052 342l-5 9M758 698l9 2M887 706l-4 10M934 446l-14 1M796 666l8 6M1384 290l-13 4M1005 578l-1 9M760 140l2 10M1126 652l8 6M932 341l-12 4" stroke="#ffffff" stroke-width="4.5" opacity="0.8"/><path d="M1002 253l8 3M1023 718l12 1M715 592l12 1M1055 50l-10 8M825 479l9 1M964 712l-5 8M1051 449l-8 12M696 174l-11 6M941 479l-7 11M944 128l14 3M643 600l10 2M1078 732l-11 3M873 320l-12 5M1047 381l-3 13M1037 298l-3 12M993 301l3 11M1054 538l11 5M1018 587l-7 6M794 37l9 8M853 126l9 6M1112 571l-8 7M797 670l-9 4M895 400l12 6M1387 567l12 5M1047 404l-8 8M1243 95l-10 3M1084 440l-2 10M894 288l8 1M800 511l3 10M1211 241l3 9M1337 701l-14 6M969 599l7 7M609 721l-9 2M1063 477l-0 8M740 397l-9 2M1225 582l-8 4M695 564l10 10M992 103l-2 13M1004 387l8 3M1031 290l-5 10M1163 611l-4 8M920 696l10 8M1292 642l5 11M1151 472l-14 1M669 294l-5 10M1444 710l-8 2M773 415l-7 4M1219 160l-8 12M1114 285l2 12M1158 382l-3 9M1206 428l3 7M1002 691l-6 11M1087 596l-3 14M905 295l9 3M1233 98l5 9M702 709l-9 7M848 510l-12 8M975 177l-10 1M1051 668l-4 13M1207 699l-4 13M689 307l-3 9M1196 266l-2 10M948 374l9 11M584 455l-15 2M945 638l-9 3M1040 406l12 7M1434 480l-9 9M845 639l3 8M995 602l2 11M1151 205l9 6M1108 43l-5 9M983 132l-9 7M945 186l-2 9M1103 488l-5 7M1219 72l1 14" stroke="#d8b878" stroke-width="4.5" opacity="0.8"/><path d="M1030 337l-14 5M875 696l1 12M915 694l-9 5M655 269l6 11M1116 400l12 0M637 681l-15 1M1167 723l-5 6M888 446l-5 11M1152 456l7 6M811 219l-9 1M620 246l13 5M1031 387l6 9M1051 127l-7 9M1245 625l-12 2M1394 361l-6 13M864 706l-9 6M939 634l10 3M790 131l-12 2M552 727l7 12M962 449l6 9M1072 636l-10 2M1065 211l1 9M1143 606l-1 12M879 378l-8 11M688 173l10 1M667 412l10 6M980 649l-6 6M870 285l3 10M1102 663l10 2M832 274l9 2M1047 477l-13 6M950 150l10 2M690 226l-11 5M579 385l-0 11M1272 530l-11 9M1020 488l13 6M928 182l10 3M1068 60l6 13M771 505l-5 8M1068 643l-10 1M719 692l9 7M1076 351l-5 12M1137 396l5 12M1264 374l-15 1M931 231l6 7M1126 542l-3 10M1114 453l-3 13M1203 266l14 1M1320 243l-9 3M1131 241l10 10M835 382l-2 12M1111 451l9 2M936 254l-7 10M1273 177l-4 13M1041 707l8 9M946 169l-3 11M1219 647l-9 10M1094 430l1 12M1383 583l2 11M846 255l-12 1M1152 464l6 13M971 97l0 15M945 208l-8 4M856 34l-4 11M1393 546l7 9M996 679l-0 9M835 152l11 7M707 160l5 7M839 683l4 9M903 691l-12 7M1069 624l11 5M1145 303l13 1M909 405l9 7" stroke="#202040" stroke-width="4.5" opacity="0.9"/><path d="M779 491l-9 9M592 221l5 13M986 482l4 10M858 245l-6 8M893 725l10 4M945 262l10 0M1279 256l-8 13M924 620l-9 8M838 618l-4 10M1135 132l-14 5M663 520l-7 5M756 84l6 9M932 703l-14 1M861 509l-7 10M967 394l8 4M885 684l-7 5M784 394l3 8M803 726l-10 8M844 687l-14 0M992 170l-6 9M907 734l5 11M467 621l10 8M1159 152l13 6M1391 579l13 7M745 258l11 6M1369 697l-9 12M1101 373l8 12M748 706l-8 8M1048 714l-4 11M848 203l-8 4M778 514l12 3M994 50l7 4M770 230l7 9M814 103l7 8M1124 491l6 7M815 408l7 11M1107 292l-0 9M975 549l4 9M675 526l-6 9M1078 650l13 1M910 272l12 3M758 619l-12 0M867 201l-4 11M858 360l0 14M1412 710l-5 10M1415 683l9 12M849 575l9 9M1025 227l14 1M1135 670l9 8M907 342l8 12M1121 522l8 1M1129 561l14 1M989 266l10 1M1086 301l-12 5M983 570l-14 0M796 630l-14 0M770 428l8 1M1141 342l5 8M846 526l13 0M750 474l1 8M1136 656l5 11M711 715l10 5M1008 538l10 6M1214 197l12 5M1219 719l12 7M871 261l11 5M750 448l-8 10M554 406l-2 10M585 681l8 6M1062 607l-14 2M696 557l10 5M931 149l6 9M568 706l9 2M1098 539l1 12M1036 492l1 11M886 137l1 11M1432 708l-12 6" stroke="#302848" stroke-width="4.5" opacity="0.9"/><rect x="0" y="560" width="1995" height="570" fill="url(#cf)"/><g fill="#12112a"><path d="M789,608 L796,770 L810,770 L795,608Z M783,594 L789,612 L796,612 L802,596 L794,606 L793,590 L790,606Z"/><path d="M902,600 L881,769 L895,771 L908,600Z M896,586 L902,604 L909,604 L915,588 L907,598 L906,582 L903,598Z"/><path d="M726,633 L746,771 L760,769 L732,631Z M720,618 L726,636 L733,636 L739,620 L731,630 L730,614 L727,630Z"/><path d="M744,668 L761,771 L775,769 L750,666Z M738,653 L744,671 L751,671 L757,655 L749,665 L748,649 L745,665Z"/><path d="M956,624 L969,771 L983,769 L962,624Z M950,610 L956,628 L963,628 L969,612 L961,622 L960,606 L957,622Z"/><path d="M990,647 L968,769 L982,771 L996,647Z M984,633 L990,651 L997,651 L1003,635 L995,645 L994,629 L991,645Z"/><path d="M1120,581 L1139,771 L1153,769 L1126,581Z M1114,567 L1120,585 L1127,585 L1133,569 L1125,579 L1124,563 L1121,579Z"/><path d="M1151,573 L1163,771 L1177,769 L1157,573Z M1145,559 L1151,577 L1158,577 L1164,561 L1156,571 L1155,555 L1152,571Z"/><path d="M1097,640 L1098,770 L1112,770 L1103,640Z M1091,626 L1097,644 L1104,644 L1110,628 L1102,638 L1101,622 L1098,638Z"/><path d="M1245,616 L1223,769 L1237,771 L1251,616Z M1239,602 L1245,620 L1252,620 L1258,604 L1250,614 L1249,598 L1246,614Z"/><path d="M1300,608 L1311,771 L1325,769 L1306,608Z M1294,594 L1300,612 L1307,612 L1313,596 L1305,606 L1304,590 L1301,606Z"/><path d="M1163,593 L1168,770 L1181,770 L1169,593Z M1157,579 L1163,597 L1170,597 L1176,581 L1168,591 L1167,575 L1164,591Z"/><path d="M857,650 L863,771 L877,769 L863,650Z M851,636 L857,654 L864,654 L870,638 L862,648 L861,632 L858,648Z"/><path d="M1037,660 L1017,769 L1031,771 L1043,660Z M1031,646 L1037,664 L1044,664 L1050,648 L1042,658 L1041,642 L1038,658Z"/><path d="M1207,650 L1193,769 L1207,771 L1213,650Z M1201,636 L1207,654 L1214,654 L1220,638 L1212,648 L1211,632 L1208,648Z"/><path d="M677,679 L657,769 L671,771 L683,681Z M671,666 L677,684 L684,684 L690,668 L682,678 L681,662 L678,678Z"/><path d="M1347,659 L1322,769 L1336,771 L1353,661Z M1341,646 L1347,664 L1354,664 L1360,648 L1352,658 L1351,642 L1348,658Z"/></g><g fill="#0c0b20"><ellipse cx="-77" cy="765" rx="23" ry="27"/><ellipse cx="-41" cy="727" rx="25" ry="29"/><ellipse cx="-19" cy="728" rx="25" ry="29"/><ellipse cx="23" cy="743" rx="28" ry="32"/><ellipse cx="50" cy="749" rx="26" ry="30"/><ellipse cx="66" cy="740" rx="28" ry="33"/><ellipse cx="94" cy="738" rx="26" ry="30"/><ellipse cx="135" cy="733" rx="25" ry="29"/><ellipse cx="155" cy="733" rx="26" ry="30"/><ellipse cx="207" cy="753" rx="26" ry="30"/><ellipse cx="229" cy="727" rx="29" ry="34"/><ellipse cx="260" cy="728" rx="23" ry="27"/><ellipse cx="299" cy="755" rx="26" ry="30"/><ellipse cx="326" cy="745" rx="21" ry="24"/><ellipse cx="347" cy="750" rx="20" ry="24"/><ellipse cx="386" cy="737" rx="26" ry="30"/><ellipse cx="408" cy="742" rx="25" ry="29"/><ellipse cx="448" cy="759" rx="23" ry="27"/><ellipse cx="477" cy="739" rx="27" ry="31"/><ellipse cx="503" cy="763" rx="29" ry="33"/><ellipse cx="543" cy="765" rx="28" ry="32"/><ellipse cx="557" cy="740" rx="23" ry="27"/><ellipse cx="594" cy="729" rx="22" ry="26"/><ellipse cx="636" cy="750" rx="25" ry="29"/><ellipse cx="667" cy="743" rx="21" ry="24"/><ellipse cx="689" cy="738" rx="24" ry="27"/><ellipse cx="732" cy="743" rx="21" ry="24"/><ellipse cx="759" cy="726" rx="27" ry="31"/><ellipse cx="772" cy="743" rx="22" ry="25"/><ellipse cx="811" cy="764" rx="28" ry="33"/><ellipse cx="845" cy="755" rx="22" ry="25"/><ellipse cx="880" cy="739" rx="29" ry="33"/><ellipse cx="908" cy="744" rx="28" ry="32"/><ellipse cx="936" cy="734" rx="27" ry="31"/><ellipse cx="972" cy="758" rx="26" ry="30"/><ellipse cx="988" cy="756" rx="28" ry="33"/><ellipse cx="1034" cy="745" rx="29" ry="33"/><ellipse cx="1058" cy="751" rx="23" ry="26"/><ellipse cx="1078" cy="765" rx="25" ry="28"/><ellipse cx="1116" cy="742" rx="22" ry="25"/><ellipse cx="1157" cy="730" rx="28" ry="33"/><ellipse cx="1183" cy="760" rx="28" ry="33"/><ellipse cx="1218" cy="728" rx="23" ry="26"/><ellipse cx="1241" cy="762" rx="22" ry="25"/><ellipse cx="1265" cy="765" rx="21" ry="24"/><ellipse cx="1312" cy="744" rx="25" ry="29"/><ellipse cx="1346" cy="738" rx="27" ry="31"/><ellipse cx="1364" cy="736" rx="30" ry="34"/><ellipse cx="1387" cy="759" rx="20" ry="23"/><ellipse cx="1420" cy="742" rx="26" ry="30"/><ellipse cx="1460" cy="737" rx="29" ry="33"/><ellipse cx="1482" cy="744" rx="24" ry="28"/><ellipse cx="1517" cy="746" rx="26" ry="30"/><ellipse cx="1545" cy="738" rx="21" ry="24"/><ellipse cx="1591" cy="733" rx="28" ry="32"/><ellipse cx="1608" cy="745" rx="25" ry="29"/><ellipse cx="1634" cy="745" rx="22" ry="25"/><ellipse cx="1683" cy="734" rx="29" ry="33"/><ellipse cx="1697" cy="725" rx="27" ry="31"/><ellipse cx="1747" cy="760" rx="29" ry="33"/><ellipse cx="1756" cy="735" rx="29" ry="34"/><ellipse cx="1807" cy="739" rx="22" ry="26"/><ellipse cx="1824" cy="729" rx="21" ry="24"/><ellipse cx="1865" cy="730" rx="24" ry="28"/><ellipse cx="1892" cy="736" rx="28" ry="32"/><ellipse cx="1922" cy="735" rx="24" ry="27"/><ellipse cx="1951" cy="744" rx="21" ry="25"/><ellipse cx="1994" cy="759" rx="21" ry="24"/><ellipse cx="2007" cy="745" rx="30" ry="34"/><ellipse cx="2040" cy="746" rx="29" ry="33"/><rect x="-116" y="783" width="80" height="365" rx="19"/><rect x="-84" y="747" width="87" height="403" rx="20"/><rect x="-61" y="748" width="84" height="402" rx="20"/><rect x="-25" y="766" width="96" height="387" rx="23"/><rect x="6" y="770" width="88" height="381" rx="21"/><rect x="18" y="762" width="96" height="390" rx="23"/><rect x="49" y="759" width="90" height="392" rx="21"/><rect x="93" y="753" width="84" height="397" rx="20"/><rect x="111" y="754" width="88" height="397" rx="21"/><rect x="162" y="774" width="90" height="377" rx="21"/><rect x="180" y="751" width="99" height="403" rx="23"/><rect x="221" y="746" width="79" height="402" rx="19"/><rect x="255" y="775" width="88" height="375" rx="21"/><rect x="291" y="762" width="71" height="385" rx="17"/><rect x="313" y="766" width="70" height="380" rx="16"/><rect x="343" y="758" width="88" height="393" rx="21"/><rect x="365" y="762" width="86" height="388" rx="20"/><rect x="408" y="778" width="80" height="371" rx="19"/><rect x="431" y="761" width="92" height="391" rx="22"/><rect x="453" y="786" width="98" height="367" rx="23"/><rect x="495" y="787" width="95" height="365" rx="22"/><rect x="518" y="759" width="79" height="390" rx="18"/><rect x="555" y="747" width="76" height="401" rx="18"/><rect x="593" y="770" width="86" height="380" rx="20"/><rect x="631" y="759" width="72" height="387" rx="17"/><rect x="648" y="757" width="81" height="392" rx="19"/><rect x="697" y="759" width="70" height="387" rx="16"/><rect x="713" y="748" width="93" height="404" rx="22"/><rect x="735" y="761" width="74" height="387" rx="17"/><rect x="763" y="787" width="97" height="366" rx="23"/><rect x="808" y="772" width="75" height="375" rx="18"/><rect x="830" y="763" width="99" height="391" rx="23"/><rect x="860" y="767" width="96" height="386" rx="22"/><rect x="891" y="755" width="91" height="396" rx="22"/><rect x="928" y="779" width="88" height="372" rx="21"/><rect x="940" y="779" width="97" height="374" rx="23"/><rect x="985" y="768" width="97" height="385" rx="23"/><rect x="1019" y="769" width="77" height="379" rx="18"/><rect x="1036" y="785" width="84" height="365" rx="20"/><rect x="1079" y="759" width="74" height="388" rx="17"/><rect x="1109" y="753" width="97" height="400" rx="23"/><rect x="1134" y="782" width="96" height="370" rx="23"/><rect x="1179" y="747" width="78" height="402" rx="18"/><rect x="1204" y="779" width="75" height="368" rx="18"/><rect x="1229" y="781" width="71" height="365" rx="17"/><rect x="1270" y="764" width="85" height="386" rx="20"/><rect x="1300" y="760" width="92" height="392" rx="22"/><rect x="1313" y="760" width="102" height="394" rx="24"/><rect x="1353" y="775" width="69" height="371" rx="16"/><rect x="1376" y="762" width="88" height="388" rx="21"/><rect x="1411" y="760" width="98" height="393" rx="23"/><rect x="1441" y="763" width="83" height="386" rx="19"/><rect x="1473" y="767" width="89" height="384" rx="21"/><rect x="1509" y="755" width="72" height="392" rx="17"/><rect x="1543" y="756" width="95" height="397" rx="22"/><rect x="1566" y="765" width="85" height="385" rx="20"/><rect x="1597" y="762" width="75" height="385" rx="18"/><rect x="1634" y="756" width="97" height="396" rx="23"/><rect x="1652" y="747" width="91" height="405" rx="21"/><rect x="1698" y="783" width="98" height="370" rx="23"/><rect x="1706" y="758" width="100" height="395" rx="24"/><rect x="1769" y="757" width="76" height="391" rx="18"/><rect x="1788" y="746" width="72" height="401" rx="17"/><rect x="1824" y="750" width="83" height="400" rx="20"/><rect x="1844" y="758" width="96" height="394" rx="23"/><rect x="1882" y="754" width="81" height="395" rx="19"/><rect x="1914" y="762" width="73" height="386" rx="17"/><rect x="1958" y="776" width="72" height="371" rx="17"/><rect x="1956" y="769" width="102" height="385" rx="24"/><rect x="1992" y="769" width="97" height="384" rx="23"/></g><rect x="0" y="685" width="1995" height="445" fill="#22225a" opacity="0.13"/><g fill="#0c0b20"><ellipse cx="-94" cy="814" rx="37" ry="42"/><ellipse cx="-34" cy="804" rx="42" ry="48"/><ellipse cx="-15" cy="817" rx="34" ry="39"/><ellipse cx="53" cy="814" rx="31" ry="36"/><ellipse cx="72" cy="828" rx="40" ry="46"/><ellipse cx="113" cy="796" rx="41" ry="48"/><ellipse cx="148" cy="805" rx="28" ry="33"/><ellipse cx="207" cy="819" rx="42" ry="48"/><ellipse cx="236" cy="811" rx="34" ry="39"/><ellipse cx="273" cy="801" rx="37" ry="42"/><ellipse cx="324" cy="830" rx="37" ry="43"/><ellipse cx="341" cy="824" rx="35" ry="40"/><ellipse cx="401" cy="803" rx="32" ry="37"/><ellipse cx="428" cy="813" rx="34" ry="40"/><ellipse cx="457" cy="826" rx="32" ry="37"/><ellipse cx="522" cy="803" rx="32" ry="37"/><ellipse cx="555" cy="807" rx="40" ry="46"/><ellipse cx="588" cy="831" rx="42" ry="48"/><ellipse cx="627" cy="817" rx="37" ry="42"/><ellipse cx="666" cy="835" rx="33" ry="38"/><ellipse cx="712" cy="803" rx="35" ry="40"/><ellipse cx="730" cy="815" rx="33" ry="38"/><ellipse cx="791" cy="800" rx="41" ry="47"/><ellipse cx="825" cy="822" rx="40" ry="45"/><ellipse cx="867" cy="815" rx="30" ry="34"/><ellipse cx="904" cy="799" rx="30" ry="34"/><ellipse cx="925" cy="813" rx="29" ry="33"/><ellipse cx="984" cy="832" rx="40" ry="45"/><ellipse cx="1021" cy="818" rx="41" ry="47"/><ellipse cx="1058" cy="809" rx="28" ry="33"/><ellipse cx="1083" cy="800" rx="38" ry="44"/><ellipse cx="1121" cy="804" rx="30" ry="35"/><ellipse cx="1169" cy="815" rx="40" ry="46"/><ellipse cx="1212" cy="811" rx="31" ry="36"/><ellipse cx="1239" cy="811" rx="40" ry="46"/><ellipse cx="1296" cy="809" rx="33" ry="38"/><ellipse cx="1321" cy="834" rx="31" ry="35"/><ellipse cx="1371" cy="817" rx="38" ry="44"/><ellipse cx="1401" cy="825" rx="31" ry="35"/><ellipse cx="1458" cy="817" rx="31" ry="36"/><ellipse cx="1477" cy="796" rx="36" ry="41"/><ellipse cx="1536" cy="824" rx="29" ry="33"/><ellipse cx="1574" cy="805" rx="36" ry="42"/><ellipse cx="1591" cy="822" rx="31" ry="35"/><ellipse cx="1656" cy="803" rx="35" ry="40"/><ellipse cx="1695" cy="820" rx="28" ry="32"/><ellipse cx="1729" cy="818" rx="30" ry="35"/><ellipse cx="1753" cy="820" rx="31" ry="36"/><ellipse cx="1788" cy="806" rx="36" ry="42"/><ellipse cx="1855" cy="802" rx="33" ry="39"/><ellipse cx="1891" cy="805" rx="37" ry="43"/><ellipse cx="1906" cy="827" rx="30" ry="34"/><ellipse cx="1951" cy="828" rx="40" ry="47"/><ellipse cx="1982" cy="826" rx="30" ry="35"/><ellipse cx="2039" cy="818" rx="32" ry="37"/><rect x="-157" y="843" width="125" height="316" rx="29"/><rect x="-105" y="838" width="142" height="326" rx="33"/><rect x="-74" y="845" width="117" height="313" rx="27"/><rect x="-0" y="839" width="107" height="316" rx="25"/><rect x="4" y="860" width="136" height="302" rx="32"/><rect x="43" y="829" width="141" height="334" rx="33"/><rect x="100" y="828" width="96" height="325" rx="23"/><rect x="136" y="852" width="143" height="311" rx="34"/><rect x="178" y="838" width="117" height="319" rx="27"/><rect x="211" y="831" width="125" height="329" rx="29"/><rect x="261" y="860" width="127" height="300" rx="30"/><rect x="282" y="852" width="119" height="306" rx="28"/><rect x="345" y="829" width="110" height="327" rx="26"/><rect x="369" y="840" width="117" height="317" rx="28"/><rect x="403" y="851" width="108" height="304" rx="25"/><rect x="468" y="828" width="109" height="327" rx="26"/><rect x="487" y="839" width="137" height="323" rx="32"/><rect x="517" y="864" width="142" height="299" rx="33"/><rect x="565" y="847" width="125" height="313" rx="29"/><rect x="609" y="861" width="113" height="295" rx="27"/><rect x="653" y="831" width="118" height="327" rx="28"/><rect x="673" y="842" width="113" height="315" rx="27"/><rect x="721" y="833" width="140" height="330" rx="33"/><rect x="758" y="854" width="134" height="308" rx="32"/><rect x="816" y="839" width="102" height="315" rx="24"/><rect x="854" y="823" width="100" height="331" rx="24"/><rect x="876" y="836" width="99" height="317" rx="23"/><rect x="916" y="863" width="134" height="298" rx="32"/><rect x="951" y="851" width="140" height="312" rx="33"/><rect x="1010" y="832" width="96" height="321" rx="23"/><rect x="1017" y="831" width="131" height="330" rx="31"/><rect x="1070" y="828" width="103" height="326" rx="24"/><rect x="1101" y="847" width="135" height="315" rx="32"/><rect x="1159" y="836" width="105" height="319" rx="25"/><rect x="1172" y="843" width="135" height="319" rx="32"/><rect x="1240" y="835" width="112" height="321" rx="26"/><rect x="1268" y="859" width="105" height="296" rx="25"/><rect x="1306" y="848" width="130" height="313" rx="31"/><rect x="1349" y="849" width="105" height="305" rx="25"/><rect x="1405" y="842" width="105" height="313" rx="25"/><rect x="1416" y="825" width="122" height="334" rx="29"/><rect x="1487" y="847" width="97" height="306" rx="23"/><rect x="1513" y="834" width="123" height="325" rx="29"/><rect x="1539" y="846" width="104" height="308" rx="25"/><rect x="1598" y="830" width="117" height="327" rx="28"/><rect x="1648" y="843" width="95" height="310" rx="22"/><rect x="1678" y="843" width="103" height="312" rx="24"/><rect x="1700" y="845" width="106" height="310" rx="25"/><rect x="1726" y="836" width="124" height="324" rx="29"/><rect x="1798" y="828" width="114" height="328" rx="27"/><rect x="1827" y="835" width="127" height="325" rx="30"/><rect x="1855" y="851" width="102" height="303" rx="24"/><rect x="1882" y="860" width="138" height="302" rx="32"/><rect x="1930" y="851" width="103" height="304" rx="24"/><rect x="1984" y="844" width="109" height="312" rx="26"/></g><rect x="0" y="755" width="1995" height="375" fill="#22225a" opacity="0.13"/><g fill="#0c0b20"><ellipse cx="-88" cy="917" rx="42" ry="48"/><ellipse cx="-48" cy="917" rx="47" ry="54"/><ellipse cx="21" cy="904" rx="57" ry="66"/><ellipse cx="82" cy="913" rx="52" ry="60"/><ellipse cx="105" cy="887" rx="52" ry="60"/><ellipse cx="185" cy="907" rx="51" ry="58"/><ellipse cx="240" cy="899" rx="54" ry="62"/><ellipse cx="264" cy="901" rx="49" ry="56"/><ellipse cx="332" cy="884" rx="45" ry="52"/><ellipse cx="400" cy="891" rx="45" ry="52"/><ellipse cx="444" cy="892" rx="44" ry="50"/><ellipse cx="495" cy="916" rx="49" ry="56"/><ellipse cx="538" cy="886" rx="46" ry="53"/><ellipse cx="587" cy="894" rx="49" ry="57"/><ellipse cx="624" cy="885" rx="48" ry="55"/><ellipse cx="682" cy="914" rx="54" ry="62"/><ellipse cx="730" cy="920" rx="54" ry="62"/><ellipse cx="792" cy="907" rx="55" ry="63"/><ellipse cx="838" cy="891" rx="55" ry="64"/><ellipse cx="910" cy="882" rx="50" ry="57"/><ellipse cx="945" cy="910" rx="53" ry="61"/><ellipse cx="993" cy="892" rx="51" ry="59"/><ellipse cx="1029" cy="912" rx="43" ry="49"/><ellipse cx="1087" cy="889" rx="50" ry="58"/><ellipse cx="1143" cy="898" rx="52" ry="59"/><ellipse cx="1205" cy="916" rx="44" ry="50"/><ellipse cx="1237" cy="919" rx="54" ry="62"/><ellipse cx="1320" cy="891" rx="47" ry="54"/><ellipse cx="1368" cy="919" rx="51" ry="59"/><ellipse cx="1421" cy="903" rx="40" ry="46"/><ellipse cx="1456" cy="920" rx="43" ry="50"/><ellipse cx="1518" cy="901" rx="46" ry="53"/><ellipse cx="1566" cy="890" rx="57" ry="65"/><ellipse cx="1607" cy="898" rx="49" ry="56"/><ellipse cx="1653" cy="894" rx="44" ry="51"/><ellipse cx="1732" cy="906" rx="48" ry="56"/><ellipse cx="1773" cy="887" rx="57" ry="65"/><ellipse cx="1823" cy="908" rx="52" ry="60"/><ellipse cx="1864" cy="919" rx="48" ry="55"/><ellipse cx="1921" cy="904" rx="58" ry="67"/><ellipse cx="1977" cy="920" rx="47" ry="54"/><ellipse cx="2019" cy="886" rx="48" ry="55"/><rect x="-159" y="951" width="143" height="213" rx="34"/><rect x="-128" y="955" width="160" height="213" rx="38"/><rect x="-76" y="950" width="195" height="226" rx="46"/><rect x="-7" y="955" width="178" height="217" rx="42"/><rect x="17" y="929" width="176" height="243" rx="42"/><rect x="100" y="948" width="172" height="223" rx="40"/><rect x="148" y="942" width="184" height="231" rx="43"/><rect x="181" y="940" width="167" height="229" rx="39"/><rect x="255" y="920" width="153" height="246" rx="36"/><rect x="322" y="927" width="154" height="239" rx="36"/><rect x="369" y="927" width="149" height="238" rx="35"/><rect x="412" y="955" width="166" height="214" rx="39"/><rect x="459" y="923" width="158" height="244" rx="37"/><rect x="503" y="933" width="168" height="236" rx="39"/><rect x="543" y="923" width="163" height="245" rx="38"/><rect x="591" y="957" width="182" height="216" rx="43"/><rect x="638" y="963" width="183" height="210" rx="43"/><rect x="698" y="951" width="187" height="223" rx="44"/><rect x="744" y="935" width="188" height="239" rx="44"/><rect x="825" y="922" width="170" height="248" rx="40"/><rect x="855" y="952" width="181" height="220" rx="42"/><rect x="906" y="933" width="174" height="238" rx="41"/><rect x="957" y="947" width="145" height="218" rx="34"/><rect x="1002" y="929" width="171" height="241" rx="40"/><rect x="1055" y="939" width="176" height="232" rx="41"/><rect x="1131" y="951" width="148" height="214" rx="35"/><rect x="1145" y="962" width="184" height="211" rx="43"/><rect x="1241" y="929" width="159" height="239" rx="37"/><rect x="1282" y="960" width="174" height="211" rx="41"/><rect x="1353" y="935" width="136" height="227" rx="32"/><rect x="1382" y="954" width="148" height="210" rx="35"/><rect x="1440" y="938" width="157" height="229" rx="37"/><rect x="1469" y="935" width="192" height="240" rx="45"/><rect x="1524" y="937" width="166" height="232" rx="39"/><rect x="1578" y="929" width="150" height="236" rx="35"/><rect x="1650" y="944" width="165" height="224" rx="39"/><rect x="1676" y="933" width="193" height="243" rx="45"/><rect x="1734" y="950" width="178" height="222" rx="42"/><rect x="1783" y="958" width="163" height="211" rx="38"/><rect x="1823" y="951" width="197" height="226" rx="46"/><rect x="1898" y="957" width="159" height="210" rx="38"/><rect x="1938" y="924" width="162" height="244" rx="38"/></g><rect x="0" y="840" width="1995" height="290" fill="#22225a" opacity="0.13"/><g fill="#0c0b20"><ellipse cx="-58" cy="994" rx="65" ry="75"/><ellipse cx="-31" cy="999" rx="59" ry="68"/><ellipse cx="34" cy="1020" rx="67" ry="77"/><ellipse cx="144" cy="1017" rx="77" ry="89"/><ellipse cx="212" cy="1003" rx="57" ry="66"/><ellipse cx="282" cy="1012" rx="63" ry="72"/><ellipse cx="318" cy="1018" rx="66" ry="76"/><ellipse cx="398" cy="995" rx="72" ry="83"/><ellipse cx="438" cy="1009" rx="56" ry="64"/><ellipse cx="525" cy="1014" rx="63" ry="73"/><ellipse cx="589" cy="994" rx="65" ry="75"/><ellipse cx="642" cy="1004" rx="72" ry="83"/><ellipse cx="714" cy="1010" rx="56" ry="65"/><ellipse cx="771" cy="1001" rx="63" ry="72"/><ellipse cx="841" cy="1022" rx="55" ry="64"/><ellipse cx="917" cy="986" rx="75" ry="87"/><ellipse cx="984" cy="993" rx="66" ry="76"/><ellipse cx="1072" cy="1015" rx="61" ry="70"/><ellipse cx="1159" cy="989" rx="75" ry="86"/><ellipse cx="1175" cy="1021" rx="56" ry="64"/><ellipse cx="1283" cy="998" rx="69" ry="79"/><ellipse cx="1332" cy="1007" rx="75" ry="86"/><ellipse cx="1387" cy="993" rx="71" ry="82"/><ellipse cx="1482" cy="1006" rx="65" ry="75"/><ellipse cx="1510" cy="1019" rx="74" ry="85"/><ellipse cx="1581" cy="1010" rx="60" ry="69"/><ellipse cx="1658" cy="1000" rx="55" ry="63"/><ellipse cx="1761" cy="1012" rx="72" ry="83"/><ellipse cx="1793" cy="1024" rx="55" ry="64"/><ellipse cx="1860" cy="1016" rx="64" ry="74"/><ellipse cx="1931" cy="988" rx="64" ry="74"/><ellipse cx="2026" cy="994" rx="74" ry="86"/><rect x="-168" y="1046" width="221" height="136" rx="52"/><rect x="-132" y="1047" width="202" height="131" rx="48"/><rect x="-80" y="1074" width="228" height="110" rx="54"/><rect x="13" y="1078" width="263" height="113" rx="62"/><rect x="115" y="1049" width="195" height="127" rx="46"/><rect x="175" y="1062" width="213" height="118" rx="50"/><rect x="206" y="1071" width="224" height="112" rx="53"/><rect x="276" y="1052" width="244" height="135" rx="57"/><rect x="343" y="1054" width="190" height="121" rx="45"/><rect x="417" y="1064" width="215" height="116" rx="51"/><rect x="479" y="1046" width="220" height="136" rx="52"/><rect x="519" y="1062" width="246" height="126" rx="58"/><rect x="618" y="1055" width="192" height="120" rx="45"/><rect x="665" y="1051" width="213" height="129" rx="50"/><rect x="747" y="1066" width="188" height="108" rx="44"/><rect x="789" y="1046" width="256" height="144" rx="60"/><rect x="871" y="1046" width="225" height="137" rx="53"/><rect x="968" y="1063" width="207" height="115" rx="49"/><rect x="1032" y="1049" width="254" height="141" rx="60"/><rect x="1080" y="1065" width="189" height="109" rx="45"/><rect x="1166" y="1053" width="233" height="132" rx="55"/><rect x="1205" y="1067" width="254" height="123" rx="60"/><rect x="1266" y="1050" width="243" height="137" rx="57"/><rect x="1372" y="1058" width="221" height="124" rx="52"/><rect x="1385" y="1078" width="251" height="111" rx="59"/><rect x="1479" y="1058" width="204" height="120" rx="48"/><rect x="1564" y="1044" width="188" height="130" rx="44"/><rect x="1639" y="1070" width="244" height="118" rx="57"/><rect x="1699" y="1068" width="188" height="106" rx="44"/><rect x="1751" y="1067" width="219" height="114" rx="51"/><rect x="1822" y="1039" width="219" height="142" rx="51"/><rect x="1899" y="1053" width="253" height="136" rx="60"/></g><rect x="0" y="945" width="1995" height="185" fill="#22225a" opacity="0.13"/><g fill="#0c0b20"><ellipse cx="-90" cy="1107" rx="91" ry="105"/><ellipse cx="25" cy="1118" rx="83" ry="95"/><ellipse cx="111" cy="1108" rx="72" ry="83"/><ellipse cx="170" cy="1117" rx="89" ry="103"/><ellipse cx="253" cy="1124" rx="81" ry="93"/><ellipse cx="334" cy="1125" rx="87" ry="99"/><ellipse cx="413" cy="1098" rx="86" ry="99"/><ellipse cx="491" cy="1131" rx="86" ry="99"/><ellipse cx="576" cy="1125" rx="92" ry="106"/><ellipse cx="642" cy="1107" rx="85" ry="98"/><ellipse cx="764" cy="1115" rx="90" ry="104"/><ellipse cx="810" cy="1114" rx="85" ry="98"/><ellipse cx="911" cy="1115" rx="72" ry="83"/><ellipse cx="1018" cy="1096" rx="83" ry="96"/><ellipse cx="1085" cy="1116" rx="76" ry="88"/><ellipse cx="1145" cy="1106" rx="90" ry="104"/><ellipse cx="1265" cy="1112" rx="84" ry="96"/><ellipse cx="1338" cy="1114" rx="86" ry="99"/><ellipse cx="1409" cy="1110" rx="92" ry="106"/><ellipse cx="1475" cy="1130" rx="74" ry="85"/><ellipse cx="1604" cy="1116" rx="94" ry="108"/><ellipse cx="1666" cy="1107" rx="74" ry="85"/><ellipse cx="1753" cy="1112" rx="76" ry="87"/><ellipse cx="1817" cy="1102" rx="94" ry="108"/><ellipse cx="1936" cy="1101" rx="72" ry="83"/><ellipse cx="1990" cy="1098" rx="84" ry="97"/><rect x="-244" y="1180" width="309" height="23" rx="73"/><rect x="-116" y="1185" width="282" height="12" rx="66"/><rect x="-12" y="1166" width="246" height="22" rx="58"/><rect x="18" y="1188" width="303" height="13" rx="71"/><rect x="115" y="1188" width="275" height="6" rx="65"/><rect x="187" y="1194" width="294" height="5" rx="69"/><rect x="266" y="1167" width="293" height="32" rx="69"/><rect x="345" y="1200" width="292" height="-1" rx="69"/><rect x="419" y="1199" width="314" height="5" rx="74"/><rect x="497" y="1175" width="290" height="23" rx="68"/><rect x="610" y="1187" width="307" height="15" rx="72"/><rect x="665" y="1182" width="290" height="16" rx="68"/><rect x="788" y="1173" width="246" height="15" rx="58"/><rect x="877" y="1162" width="283" height="34" rx="67"/><rect x="955" y="1177" width="260" height="14" rx="61"/><rect x="991" y="1179" width="308" height="24" rx="72"/><rect x="1123" y="1179" width="285" height="18" rx="67"/><rect x="1192" y="1183" width="292" height="16" rx="69"/><rect x="1253" y="1183" width="313" height="20" rx="74"/><rect x="1349" y="1189" width="252" height="0" rx="59"/><rect x="1444" y="1191" width="319" height="14" rx="75"/><rect x="1541" y="1165" width="250" height="23" rx="59"/><rect x="1624" y="1173" width="257" height="18" rx="60"/><rect x="1657" y="1177" width="318" height="28" rx="75"/><rect x="1813" y="1158" width="245" height="29" rx="58"/><rect x="1847" y="1165" width="286" height="32" rx="67"/></g><g fill="none" stroke="#3050c8" stroke-width="3" opacity="0.12"><path d="M1140,1053 A31 34 0 0 1 1174,1078"/><path d="M883,858 A63 69 0 0 1 951,908"/><path d="M407,815 A42 46 0 0 1 453,848"/><path d="M718,720 A44 48 0 0 1 766,755"/><path d="M1081,1009 A34 37 0 0 0 1044,1036"/><path d="M1585,830 A31 34 0 0 0 1550,854"/><path d="M152,790 A77 85 0 0 0 67,852"/><path d="M1812,1017 A68 75 0 0 0 1737,1072"/><path d="M998,1010 A44 49 0 0 0 949,1045"/><path d="M886,957 A79 87 0 0 1 973,1020"/><path d="M963,863 A33 37 0 0 0 927,890"/><path d="M1034,996 A33 37 0 0 1 1071,1023"/><path d="M1339,700 A77 85 0 0 1 1424,761"/><path d="M469,1017 A56 61 0 0 0 407,1062"/><path d="M1696,916 A43 47 0 0 1 1743,950"/><path d="M471,718 A58 63 0 0 1 535,764"/><path d="M305,815 A36 40 0 0 0 265,844"/><path d="M1290,858 A65 72 0 0 0 1218,911"/><path d="M1205,953 A44 49 0 0 1 1254,988"/><path d="M1476,975 A40 44 0 0 1 1520,1007"/><path d="M1376,758 A67 73 0 0 0 1303,811"/><path d="M593,850 A42 47 0 0 1 639,884"/><path d="M732,768 A50 55 0 0 0 677,808"/><path d="M588,999 A43 48 0 0 0 540,1034"/><path d="M839,1037 A74 81 0 0 1 920,1096"/><path d="M1662,1012 A77 84 0 0 1 1747,1074"/><path d="M330,894 A31 35 0 0 1 364,919"/><path d="M782,811 A78 86 0 0 1 869,874"/><path d="M159,858 A54 60 0 0 0 100,901"/><path d="M1274,750 A63 70 0 0 0 1205,801"/><path d="M1359,757 A59 65 0 0 1 1424,804"/><path d="M470,877 A73 80 0 0 1 550,935"/><path d="M706,791 A57 62 0 0 0 644,836"/><path d="M1658,919 A69 76 0 0 0 1582,974"/><path d="M1251,937 A49 54 0 0 0 1197,976"/><path d="M371,828 A36 39 0 0 0 331,856"/><path d="M1368,956 A76 84 0 0 0 1285,1017"/><path d="M1828,878 A57 62 0 0 1 1890,923"/><path d="M307,861 A56 61 0 0 1 369,906"/><path d="M732,699 A71 78 0 0 1 810,756"/></g></g></defs></svg></body></html>
